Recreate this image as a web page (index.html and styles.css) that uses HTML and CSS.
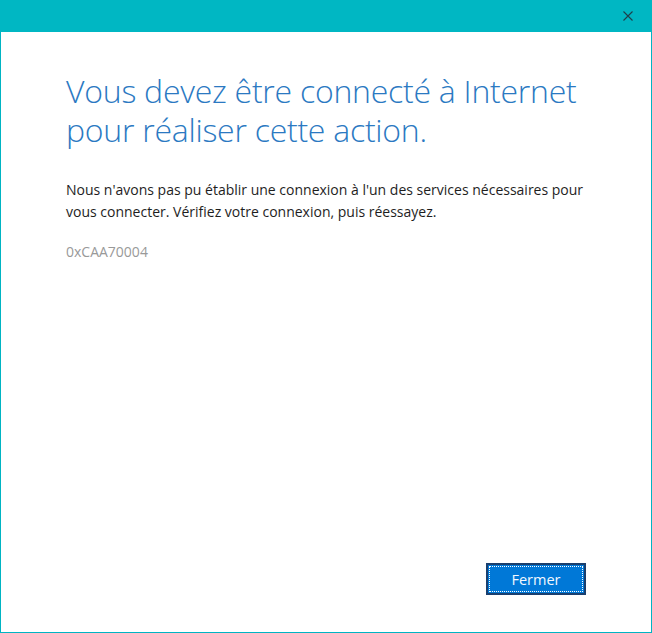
FILE: index.html
```html
<!DOCTYPE html>
<html lang="fr">
<head>
  <meta charset="UTF-8">
  <title>Connexion requise</title>
  <link rel="stylesheet" href="styles.css">
</head>
<body>
  <div id="window">
    <div class="titlebar">
      <button class="close-btn" aria-label="Fermer">
        <svg width="10" height="10" viewBox="0 0 10 10">
          <path d="M0.5 0.5 L9.5 9.5 M9.5 0.5 L0.5 9.5" stroke="#1f3f4a" stroke-width="1.1" fill="none"/>
        </svg>
      </button>
    </div>
    <div class="content">
      <h1>Vous devez être connecté à Internet pour réaliser cette action.</h1>
      <p class="message">Nous n'avons pas pu établir une connexion à l'un des services nécessaires pour vous connecter. Vérifiez votre connexion, puis réessayez.</p>
      <p class="error-code">0xCAA70004</p>
    </div>
    <div class="footer">
      <button class="primary-btn">Fermer</button>
    </div>
  </div>
</body>
</html>
```

FILE: styles.css
```css
html, body {
  margin: 0;
  padding: 0;
  background-color: #fff;
}

body {
  font-family: "Open Sans", "Noto Sans", sans-serif;
}

#window {
  width: 652px;
  height: 633px;
  box-sizing: border-box;
  border: 1px solid #00b4c3;
  border-top: none;
  display: flex;
  flex-direction: column;
}

.titlebar {
  height: 32px;
  background-color: #00b7c3;
  display: flex;
  justify-content: flex-end;
  align-items: center;
  margin: 0 -1px;
}

.close-btn {
  width: 46px;
  height: 32px;
  border: none;
  background: transparent;
  padding: 0;
  display: flex;
  align-items: center;
  justify-content: center;
  margin-right: 1px;
}

.content {
  flex-grow: 1;
  padding: 39px 40px 0 65px;
}

h1 {
  margin: 0;
  font-weight: 300;
  font-size: 32px;
  line-height: 39px;
  color: #2b79c2;
  letter-spacing: -0.25px;
}

.message {
  margin: 30px 0 0;
  max-width: 530px;
  font-size: 14px;
  line-height: 22px;
  color: #1e1e1e;
}

.error-code {
  margin: 19px 0 0;
  font-size: 14px;
  color: #999;
}

.footer {
  display: flex;
  justify-content: flex-end;
  padding: 0 65px 37px 0;
}

.primary-btn {
  width: 100px;
  height: 32px;
  box-sizing: border-box;
  border: 2px solid #1a3f6e;
  background-color: #0078d7;
  color: #f2f8ff;
  font-family: "Open Sans", "Noto Sans", sans-serif;
  font-size: 14.5px;
  outline: 1px dotted #fff;
  outline-offset: -4px;
  padding: 0;
}
```
